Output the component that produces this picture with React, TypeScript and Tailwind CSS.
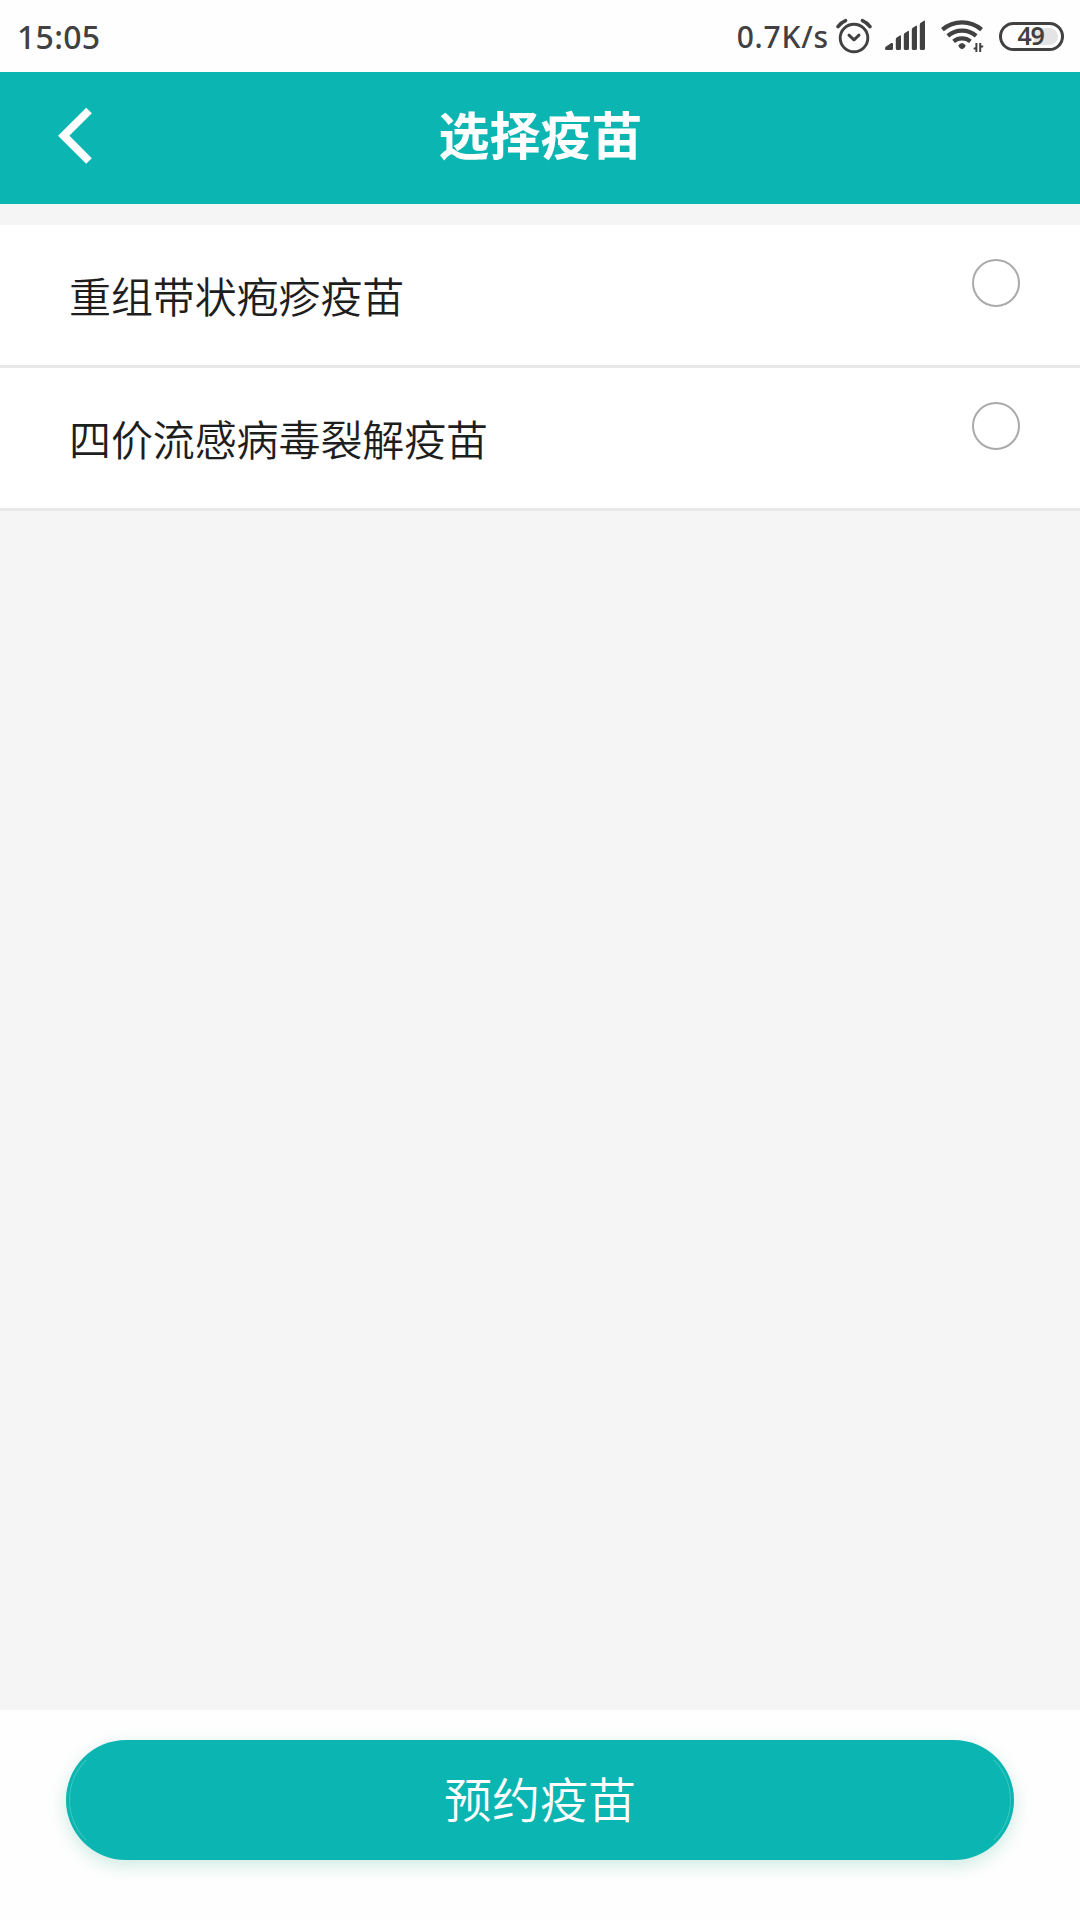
const vaccines = ['重组带状疱疹疫苗', '四价流感病毒裂解疫苗'];

function AlarmIcon() {
  return (
    <svg className="ml-[7px] h-9 w-9 shrink-0" viewBox="836 18 36 36" fill="none" stroke="#414141">
      <circle cx="854" cy="38" r="13.8" strokeWidth="2.9" />
      <path d="M849 35.2l5 4.6 5-4.6" strokeWidth="3" strokeLinecap="round" strokeLinejoin="round" />
      <path d="M838 26.6q3.2-4.2 7.6-6M870 26.6q-3.2-4.2-7.6-6" strokeWidth="3.4" strokeLinecap="round" />
    </svg>
  );
}

function SignalIcon() {
  return (
    <svg className="ml-3 h-8 w-[42px] shrink-0" viewBox="884 20 42 32" fill="#414141">
      <path d="M885 48.5q0-1.6 1.5-2.2l4.8-3.2q1.7-.6 1.7 1V48.5q0 1.5-1.5 1.5h-5q-1.5 0-1.5-1.5z" />
      <path d="M895.8 39.6q0-1.6 1-2.2l3.2-2q1-.6 1 .8V48.5q0 1.5-1.5 1.5h-2.2q-1.5 0-1.5-1.5z" />
      <path d="M903.8 35.2q0-1.6 1-2.2l3.2-2q1-.6 1 .8V48.5q0 1.5-1.5 1.5h-2.2q-1.5 0-1.5-1.5z" />
      <path d="M911.8 30q0-1.6 1-2.2l3.2-2q1-.6 1 .8V48.5q0 1.5-1.5 1.5h-2.2q-1.5 0-1.5-1.5z" />
      <path d="M919.8 25q0-1.6 1-2.2l3.2-2q1-.6 1 .8V48.5q0 1.5-1.5 1.5h-2.2q-1.5 0-1.5-1.5z" />
    </svg>
  );
}

function WifiIcon() {
  return (
    <svg className="ml-[14px] h-9 w-11 shrink-0" viewBox="940 20 44 36" fill="none" stroke="#414141">
      <path d="M942.4 31.6a30 30 0 0 1 39.2 0" strokeWidth="4.2" />
      <path d="M947.8 37.8a22 22 0 0 1 28.4 0" strokeWidth="4.2" />
      <path d="M953.6 43.4a13.5 13.5 0 0 1 16.8 0" strokeWidth="4.2" />
      <path d="M958.2 47.4q3.8-5 7.6 0q-.6 2.4-3.8 3.8q-3.2-1.4-3.8-3.8z" fill="#414141" stroke="none" />
      <path d="M977.4 45v9h-2v-2.6h-1.8v-1.6l1.8-.6V45zM979.2 54v-9h2v2.6h2v1.6l-2 .6V54z" fill="#414141" stroke="none" />
    </svg>
  );
}

function Battery() {
  return (
    <div className="relative ml-[15px] flex h-[29px] w-[65px] shrink-0 items-center rounded-full border-[3px] border-[#414141] p-[3px]">
      <div className="ml-auto h-[17px] w-[24px] rounded-r-full bg-[#e4e4e4]" />
      <span className='absolute inset-0 flex items-center justify-center pb-px pr-0.5 font-["Noto_Sans",sans-serif] text-[25px] font-semibold leading-none tracking-[-1.2px]'>
        49
      </span>
    </div>
  );
}

export default function App() {
  return (
    <div className='flex h-[1920px] w-[1080px] flex-col overflow-hidden bg-[#f5f5f5] font-["Noto_Sans_CJK_SC",sans-serif]'>
      <div className='flex h-[72px] shrink-0 items-center bg-[#fefefe] pl-[17px] pr-4 font-["Noto_Sans",sans-serif] text-[#414141]'>
        <span className="pt-px text-[32px] font-[540] leading-none tracking-[0.3px]">15:05</span>
        <span className="ml-auto pt-px text-[30px] font-[530] leading-none tracking-[0.8px]">0.7K/s</span>
        <AlarmIcon />
        <SignalIcon />
        <WifiIcon />
        <Battery />
      </div>

      <header className="grid h-[132px] shrink-0 grid-cols-[1fr_auto_1fr] items-center bg-[#0bb5b2] text-white">
        <svg className="mb-1 ml-[56px] h-[60px] w-10" viewBox="56 106 40 60" fill="none" stroke="white" strokeWidth="8">
          <path d="M89 110.5L63.7 135.7L89 161" />
        </svg>
        <h1 className="pb-[10px] pl-px text-[51px] font-bold leading-none">选择疫苗</h1>
      </header>

      <ul className="mt-[21px] shrink-0">
        {vaccines.map((name) => (
          <li
            key={name}
            className="flex h-[143px] items-start justify-between border-b-[3px] border-[#e8e8e8] bg-white pl-[69px] pr-[60px]"
          >
            <span className="pt-[49px] text-[42px] font-[350] leading-[42px] tracking-[-0.1px] text-[#1e1e1e]">
              {name}
            </span>
            <span className="mt-[34px] size-12 rounded-full border-2 border-[#aaa]" />
          </li>
        ))}
      </ul>

      <footer className="mt-auto h-[210px] shrink-0 bg-[#fefefe] px-[66px] pt-[30px]">
        <button className="relative flex h-[120px] w-full items-center justify-center rounded-full bg-[#0bb5b2] pb-[7px] text-[48px] font-[350] leading-none text-white shadow-[0_6px_18px_rgba(20,160,120,0.2)]">
          <span className="absolute inset-[3px] rounded-full border border-y-transparent border-x-[#3ec6c0]" />
          预约疫苗
        </button>
      </footer>
    </div>
  );
}
